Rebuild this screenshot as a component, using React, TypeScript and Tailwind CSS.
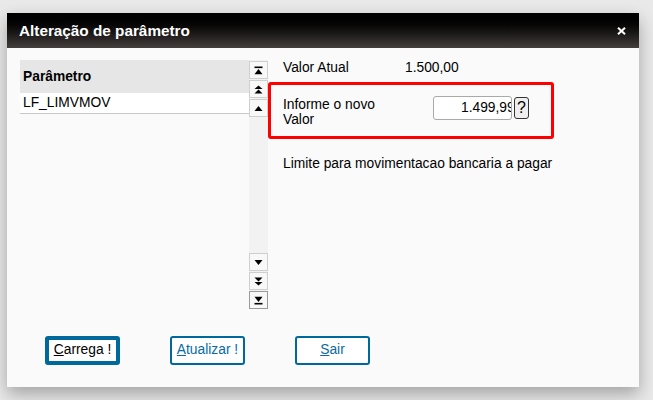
import React from "react";

const Tri = ({ dir, bar, double }: { dir: "up" | "down"; bar?: "top" | "bottom"; double?: boolean }) => {
  const up = dir === "up";
  return (
    <svg width="9" height="9" viewBox="0 0 9 9" className="block">
      {bar === "top" && <rect x="0.5" y="0.5" width="8" height="1.6" fill="#000" />}
      {bar === "bottom" && <rect x="0.5" y="6.9" width="8" height="1.6" fill="#000" />}
      {double ? (
        up ? (
          <>
            <polygon points="4.5,0.5 8.5,4 0.5,4" fill="#000" />
            <polygon points="4.5,4.5 8.5,8.5 0.5,8.5" fill="#000" />
          </>
        ) : (
          <>
            <polygon points="0.5,0.5 8.5,0.5 4.5,4.5" fill="#000" />
            <polygon points="0.5,5 8.5,5 4.5,8.5" fill="#000" />
          </>
        )
      ) : up ? (
        bar === "top" ? (
          <polygon points="4.5,3 8.5,8.3 0.5,8.3" fill="#000" />
        ) : (
          <polygon points="4.5,2 8.5,7 0.5,7" fill="#000" />
        )
      ) : bar === "bottom" ? (
        <polygon points="0.5,0.7 8.5,0.7 4.5,6" fill="#000" />
      ) : (
        <polygon points="0.5,2 8.5,2 4.5,7" fill="#000" />
      )}
    </svg>
  );
};

const ScrollBtn = ({ children }: { children: React.ReactNode }) => (
  <div className="h-[18px] w-[19px] flex items-center justify-center border border-[#cfcfcf] bg-[#f8f8f8]">
    {children}
  </div>
);

export default function App() {
  return (
    <div
      className="w-[653px] h-[400px] bg-[#e9e9e9] pt-[13px] pl-[7px] text-[13.8px] text-black"
      style={{ fontFamily: '"Liberation Sans", Arial, sans-serif' }}
    >
      <div className="w-[632px] h-[374px] bg-[#fafafa] flex flex-col shadow-[0_7px_16px_rgba(0,0,0,0.3)]">
        {/* Title bar */}
        <div className="h-[35px] bg-gradient-to-b from-[#000000] to-[#433f3d] flex items-center justify-between pl-[12px] pr-[13px]">
          <span className="text-white font-bold text-[15.3px] leading-[18px]">Alteração de parâmetro</span>
          <svg width="9" height="8" viewBox="0 0 9 8" className="block">
            <line x1="1" y1="0.8" x2="8" y2="7.2" stroke="#fff" strokeWidth="2" />
            <line x1="8" y1="0.8" x2="1" y2="7.2" stroke="#fff" strokeWidth="2" />
          </svg>
        </div>

        {/* Body */}
        <div className="flex flex-col pt-[12px] pl-[13px]">
          <div className="flex h-[249px]">
            {/* Table */}
            <div className="w-[229px] flex flex-col">
              <div className="h-[33px] bg-[#e6e6e6] font-bold pl-[3px] flex items-center leading-[16px]">Parâmetro</div>
              <div className="h-[21px] border-b border-[#c8c8c8] pl-[3px] flex items-center leading-[16px] bg-white">
                LF_LIMVMOV
              </div>
            </div>
            {/* Scroll column */}
            <div className="w-[19px] flex flex-col justify-between bg-[#f2f2f3] pt-[1px]">
              <div className="flex flex-col gap-[1px]">
                <ScrollBtn>
                  <Tri dir="up" bar="top" />
                </ScrollBtn>
                <ScrollBtn>
                  <Tri dir="up" double />
                </ScrollBtn>
                <ScrollBtn>
                  <Tri dir="up" />
                </ScrollBtn>
              </div>
              <div className="flex flex-col gap-[1px]">
                <ScrollBtn>
                  <Tri dir="down" />
                </ScrollBtn>
                <ScrollBtn>
                  <Tri dir="down" double />
                </ScrollBtn>
                <div className="h-[18px] w-[19px] flex items-center justify-center border border-[#9a9a9a] bg-[#f8f8f8]">
                  <Tri dir="down" bar="bottom" />
                </div>
              </div>
            </div>
            {/* Right panel */}
            <div className="flex flex-col">
              <div className="h-[16px] leading-[16px] flex pl-[15px]">
                <span className="w-[122px]">Valor Atual</span>
                <span>1.500,00</span>
              </div>
              <div className="mt-[6px] w-[286px] h-[57px] border-[3px] border-[#ff0000] rounded-[3px] flex items-start pl-[12px]">
                <div className="w-[150px] mt-[12px] leading-[15px]">
                  Informe o novo
                  <br />
                  Valor
                </div>
                <div className="mt-[11px] w-[79px] h-[24px] border border-[#a9a9a9] rounded-[3px] bg-white overflow-hidden whitespace-nowrap pl-[27px] flex items-center leading-[16px]">
                  1.499,99
                </div>
                <div className="mt-[12px] ml-[2px] w-[15px] h-[22px] border border-[#333] rounded-[3px] bg-[#efefef] flex items-center justify-center text-[16px] leading-[16px]">
                  ?
                </div>
              </div>
              <div className="mt-[17px] pl-[15px] leading-[16px]">Limite para movimentacao bancaria a pagar</div>
            </div>
          </div>

          {/* Buttons */}
          <div className="flex gap-[50px] pl-[25px] mt-[27px]">
            <div className="w-[75px] h-[29px] border-[4px] border-[#00699c] rounded-[3px] flex items-center justify-center text-black bg-white">
              <span>
                <span className="underline">C</span>arrega !
              </span>
            </div>
            <div className="w-[75px] h-[29px] border-2 border-[#00699c] rounded-[3px] flex items-center justify-center text-[#0a6aa3] bg-white">
              <span>
                <span className="underline">A</span>tualizar !
              </span>
            </div>
            <div className="w-[75px] h-[29px] border-2 border-[#00699c] rounded-[3px] flex items-center justify-center text-[#0a6aa3] bg-white">
              <span>
                <span className="underline">S</span>air
              </span>
            </div>
          </div>
        </div>
      </div>
    </div>
  );
}
